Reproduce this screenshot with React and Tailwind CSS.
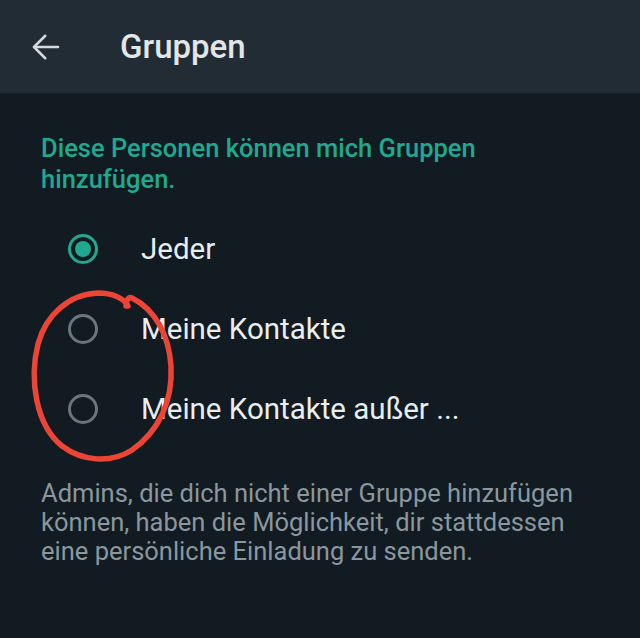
import React from "react";

function Radio({ checked }) {
  return checked ? (
    <div className="w-[30px] h-[30px] rounded-full border-[3px] border-[#20a891] flex items-center justify-center">
      <div className="w-[16px] h-[16px] rounded-full bg-[#20a891]" />
    </div>
  ) : (
    <div className="w-[30px] h-[30px] rounded-full border-[3px] border-[#6a767e]" />
  );
}

function Row({ checked, label }) {
  return (
    <div className="flex items-center h-[80px]">
      <div className="w-[100px] pl-[68px] flex items-center">
        <Radio checked={checked} />
      </div>
      <div className="pl-[41px] text-[29.5px] text-[#e9edef]">{label}</div>
    </div>
  );
}

export default function App() {
  return (
    <div className="w-[640px] h-[638px] bg-[#111b21] relative overflow-hidden" style={{ fontFamily: "Roboto, 'Noto Sans', sans-serif" }}>
      <div className="h-[93px] bg-[#222c34] flex items-center">
        <div className="w-[120px] pl-[28px] flex items-center">
          <svg width="36" height="36" viewBox="0 0 24 24" fill="none" stroke="#d6dadd" strokeWidth="1.7" strokeLinecap="round" strokeLinejoin="round">
            <path d="M20 12H4" />
            <path d="M11.5 4.5L4 12l7.5 7.5" />
          </svg>
        </div>
        <div className="text-[33px] font-medium text-[#e3e6e8]">Gruppen</div>
      </div>
      <div className="pt-[40px] px-[41px]">
        <div className="text-[25.5px] leading-[31px] font-medium text-[#20a891]">
          Diese Personen können mich Gruppen
          <br />
          hinzufügen.
        </div>
      </div>
      <div className="mt-[14px]">
        <Row checked label="Jeder" />
        <Row label="Meine Kontakte" />
        <Row label="Meine Kontakte außer ..." />
      </div>
      <div className="px-[41px] pt-[30px] text-[25.5px] leading-[29px] text-[#8a979f]">
        Admins, die dich nicht einer Gruppe hinzufügen
        <br />
        können, haben die Möglichkeit, dir stattdessen
        <br />
        eine persönliche Einladung zu senden.
      </div>
      <svg className="absolute left-0 top-0 pointer-events-none" width="640" height="638" viewBox="0 0 640 638" fill="none">
        <path
          d="M128 306 C 124 298, 112 293, 98 293 C 70 294, 46 314, 38 344 C 29 380, 36 425, 62 446 C 82 461, 110 464, 132 450 C 158 432, 173 402, 171 366 C 169 336, 156 310, 132 298 C 128 296, 126 302, 126 306"
          stroke="#ec4536"
          strokeWidth="5.5"
          strokeLinecap="round"
          strokeLinejoin="round"
        />
      </svg>
    </div>
  );
}
